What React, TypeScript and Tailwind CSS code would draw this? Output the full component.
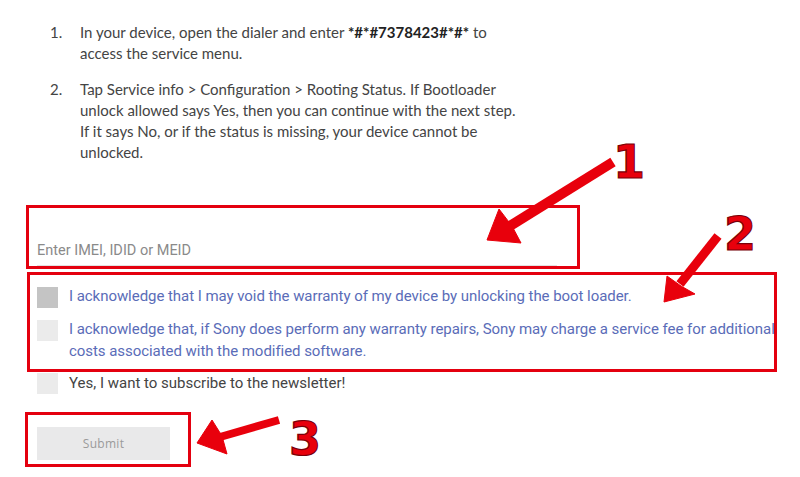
import React from 'react';

// Red annotation arrows drawn over the form
function Annotations() {
  return (
    <svg
      className="absolute inset-0 pointer-events-none"
      width={800}
      height={477}
      viewBox="0 0 800 477"
    >
      <g fill="#e8000c" stroke="#e8000c">
        {/* arrow 1 */}
        <line x1={613} y1={162} x2={510} y2={226} strokeWidth={10} />
        <polygon points="487,240 499,209 512,226 521,243" strokeWidth={1} strokeLinejoin="round" />
        {/* arrow 2 */}
        <line x1={718} y1={236} x2={680} y2={284} strokeWidth={9} />
        <polygon points="664,302 667,276 681,286 695,294" strokeWidth={1} strokeLinejoin="round" />
        {/* arrow 3 */}
        <line x1={279} y1={420} x2={220} y2={437} strokeWidth={8} />
        <polygon points="197,443 212,420 222,436 227,454" strokeWidth={1} strokeLinejoin="round" />
      </g>
      <g
        fill="#e8000c"
        stroke="#7a0008"
        strokeWidth={1.2}
        fontFamily="'DejaVu Sans', sans-serif"
        fontWeight={700}
        fontSize={46}
        textAnchor="middle"
      >
        <text x={629} y={178}>1</text>
        <text x={740} y={250}>2</text>
        <text x={305} y={455}>3</text>
      </g>
    </svg>
  );
}

function Checkbox({ checked }: { checked?: boolean }) {
  return (
    <div
      className={
        checked
          ? 'w-[21px] h-[21px] shrink-0 bg-[#c4c4c4]'
          : 'w-[21px] h-[21px] shrink-0 bg-[#ebebeb]'
      }
    />
  );
}

export default function App() {
  return (
    <div className="relative w-[800px] h-[477px] overflow-hidden bg-white">
      {/* Steps */}
      <ol className="pt-[22px] pl-[50px] text-[15px] leading-[21px] text-[#444] font-['Lato',sans-serif]">
        <li className="flex mb-[15px]">
          <span className="w-[30px] shrink-0">1.</span>
          <span>
            In your device, open the dialer and enter{' '}
            <b className="font-bold text-[#222]">*#*#7378423#*#*</b> to
            <br />
            access the service menu.
          </span>
        </li>
        <li className="flex">
          <span className="w-[30px] shrink-0">2.</span>
          <span>
            Tap Service info &gt; Configuration &gt; Rooting Status. If Bootloader
            <br />
            unlock allowed says Yes, then you can continue with the next step.
            <br />
            If it says No, or if the status is missing, your device cannot be
            <br />
            unlocked.
          </span>
        </li>
      </ol>

      {/* Form */}
      <div className="mt-[42px] flex flex-col font-['Roboto',sans-serif]">
        <div className="ml-[26px] w-[554px] h-[64px] border-[3px] border-[#e4000f] flex flex-col justify-end">
          <div className="ml-[8px] w-[520px] pb-[4px] border-b border-[#e2e2e2] text-[14.5px] leading-[20px] text-[#8a8a8a]">
            Enter IMEI, IDID or MEID
          </div>
        </div>

        <div className="ml-[27px] mt-[3px] w-[750px] border-[3px] border-[#e4000f] pt-[10px] pb-[7px] pl-[7px] flex flex-col gap-[10px] text-[15px] leading-[22px] text-[#5a6cb8] tracking-[-0.05px]">
          <label className="flex items-start gap-[11px]">
            <div className="mt-[2px]">
              <Checkbox checked />
            </div>
            <span className="whitespace-nowrap">I acknowledge that I may void the warranty of my device by unlocking the boot loader.</span>
          </label>
          <label className="flex items-start gap-[11px]">
            <div className="mt-[2px]">
              <Checkbox />
            </div>
            <span className="whitespace-nowrap">
              I acknowledge that, if Sony does perform any warranty repairs, Sony may charge a service fee for additional
              <br />
              costs associated with the modified software.
            </span>
          </label>
        </div>

        <label className="ml-[37px] flex items-start gap-[11px] text-[15px] leading-[22px] text-[#444]">
          <div className="mt-[1px]">
            <Checkbox />
          </div>
          <span>Yes, I want to subscribe to the newsletter!</span>
        </label>

        <div className="ml-[25px] mt-[18px] w-[166px] h-[55px] border-[3px] border-[#e4000f] pt-[12px] pl-[9px]">
          <button className="w-[133px] h-[33px] bg-[#e9e9ea] text-[12px] text-[#9a9a9a] font-['Open_Sans',sans-serif] tracking-[0.3px]">
            Submit
          </button>
        </div>
      </div>

      <Annotations />
    </div>
  );
}
